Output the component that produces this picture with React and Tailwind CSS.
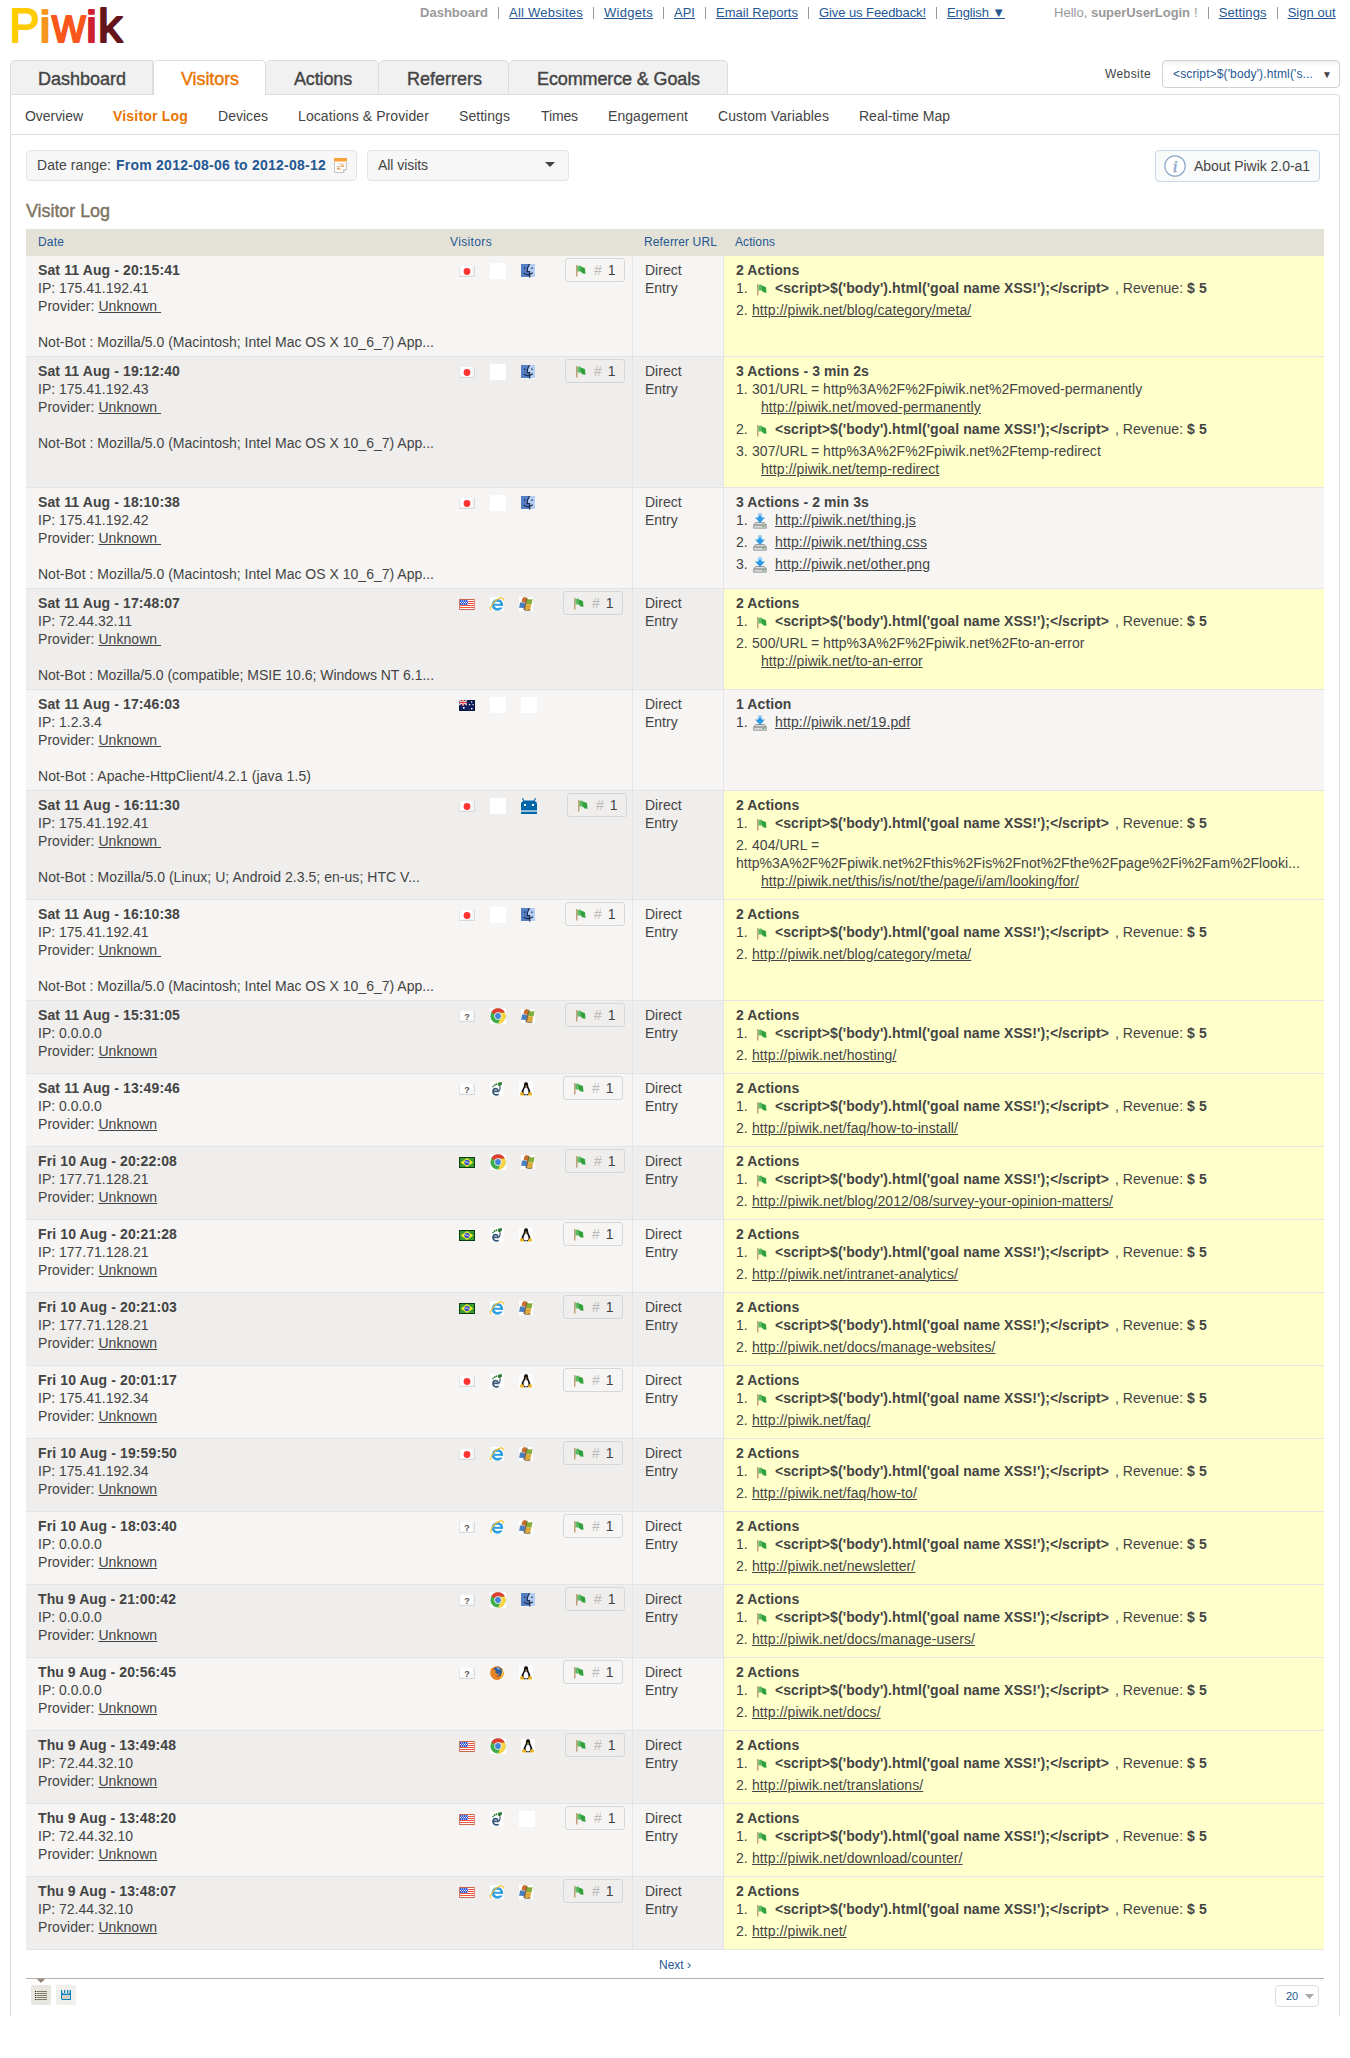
import React, { useLayoutEffect, useRef } from "react";

/* Spreads a single-line label over a given width through letter spacing. */
function Fit({ w, className = "", children }) {
  const ref = useRef(null);
  useLayoutEffect(() => {
    const el = ref.current;
    el.style.letterSpacing = "0px";
    const natural = el.getBoundingClientRect().width;
    el.style.letterSpacing = (w - natural) / el.textContent.length + "px";
  }, [w]);
  return (
    <span ref={ref} className={"inline-block whitespace-pre " + className}>
      {children}
    </span>
  );
}

function Logo() {
  const letters = [
    ["P", 9.5, 30, "#ffcc00", 48],
    ["i", 39.5, 11, "#f7941e", 44],
    ["w", 52, 33.5, "#f8561a", 48],
    ["i", 86, 11, "#cf2030", 44],
    ["k", 98, 24.5, "#64141a", 47],
  ];
  return (
    <svg width="130" height="60" viewBox="0 0 130 60" className="block overflow-visible">
      {letters.map(([c, x, len, color, size], i) => (
        <text key={i} x={x} y="42" fontSize={size} textLength={len} lengthAdjust="spacingAndGlyphs"
          fill={color} stroke={color} strokeWidth="2" strokeLinejoin="round" fontFamily="Liberation Sans, sans-serif">
          {c}
        </text>
      ))}
    </svg>
  );
}

const svg = (w, h, children, className = "") => (
  <svg width={w} height={h} viewBox={`0 0 ${w} ${h}`} className={"block shrink-0 " + className}>
    {children}
  </svg>
);

function CountryFlag({ code }) {
  if (code === "jp" || code === "xx")
    return svg(16, 11, <>
      <rect width="16" height="11" fill="#d9d9d9" />
      <rect x=".5" width="14.5" height="10" fill="#f4f4f4" />
      <rect x="1" y="0" width="12" height="9" fill="#fdfdfd" />
      {code === "jp"
        ? <circle cx="8" cy="5.5" r="3.4" fill="#f33" />
        : <text x="8" y="9" textAnchor="middle" fontSize="9" fontWeight="bold" fill="#555" fontFamily="Liberation Sans, sans-serif">?</text>}
    </>);
  if (code === "us")
    return svg(16, 11, <>
      <rect width="16" height="11" fill="#fff" />
      {[0, 2, 4, 6, 8, 10].map((y) => <rect key={y} y={y} width="16" height="1" fill={y === 0 || y === 10 ? "#c8684f" : "#f05545"} />)}
      <rect width="1" height="11" fill="#c97a66" />
      <rect x="15" width="1" height="11" fill="#e08a78" />
      <rect x="1" y="1" width="8" height="5" fill="#2b55e0" />
      {[2, 4, 6, 8].map((x) => <g key={x} fill="#fff"><rect x={x} y="1.5" width="1" height="1" /><rect x={x - 1} y="3" width="1" height="1" /><rect x={x} y="4.5" width="1" height="1" /></g>)}
    </>);
  if (code === "au")
    return svg(16, 11, <>
      <rect width="16" height="11" fill="#12205e" />
      <rect x="0.5" y="0.5" width="15" height="10" fill="none" stroke="#0c1440" />
      <path d="M0 0L8 5M8 0L0 5" stroke="#e8b8c0" strokeWidth="1.4" />
      <path d="M4 0V5.5M0 2.5H8" stroke="#fff" strokeWidth="2" />
      <path d="M4 0V5.5M0 2.5H8" stroke="#e33" strokeWidth="1" />
      <g fill="#fff"><rect x="4" y="7" width="1.6" height="1.6" /><rect x="12" y="1.3" width="1.2" height="1.2" /><rect x="10" y="4" width="1.2" height="1.2" /><rect x="13.5" y="4" width="1.2" height="1.2" /><rect x="12" y="8" width="1.4" height="1.4" /></g>
    </>);
  return svg(16, 11, <>
    <rect width="16" height="11" fill="#0a3d10" />
    <rect x="1" y="1" width="14" height="9" fill="#3a9a30" />
    <path d="M8 1L14.2 5.5L8 10L1.8 5.5Z" fill="#fbee2c" />
    <circle cx="8" cy="5.5" r="2.7" fill="#3a55c4" />
    <path d="M5.6 4.8Q8.4 4.6 10.4 6.5" fill="none" stroke="#cfe0f4" strokeWidth=".9" />
  </>);
}

function Browser({ name }) {
  if (name === "chrome")
    return svg(16, 16, <>
      <rect width="16" height="16" fill="#fff" />
      <circle cx="8" cy="8" r="7.6" fill="#3fae49" />
      <path d="M8 8L1.3 4.2A7.6 7.6 0 0 1 14.9 4.8H8Z" fill="#dd4033" />
      <path d="M8 4.8H14.9A7.6 7.6 0 0 1 8 15.6L10.8 9.6Z" fill="#fdd541" />
      <circle cx="8" cy="8" r="3.7" fill="#f6f6f2" />
      <circle cx="8" cy="8" r="2.9" fill="#4484d8" />
    </>);
  if (name === "ie")
    return svg(14, 14, <>
      <rect width="14" height="14" fill="#fff" />
      <circle cx="7.4" cy="7.8" r="4.5" fill="none" stroke="#2f9fe4" strokeWidth="2.7" />
      <rect x="9" y="8.9" width="5" height="1.6" fill="#fff" />
      <path d="M4 7.8H13" stroke="#2f9fe4" strokeWidth="2" />
      <path d="M1.5 13.2C-1 11 4 2.5 11 .9C13.6.6 13.5 2 12.8 3.4" fill="none" stroke="#f5c02f" strokeWidth="1.2" />
    </>);
  if (name === "firefox")
    return svg(14, 14, <>
      <rect width="14" height="14" fill="#fff" />
      <circle cx="7" cy="7" r="6.7" fill="#d86a1c" />
      <circle cx="7.6" cy="5.8" r="4.5" fill="#2d5f9c" />
      <path d="M6 1.4Q9 .6 10.4 3L8.6 4Z" fill="#73b4de" />
      <path d="M.6 4L2 1.6L3.6 3.6L6.2 4.2L5 6L7 8L10 7.6Q8 11 4.6 9.6Q8 13 11.6 9.4Q13 7 11.6 3Q14.4 5.4 13.4 9A6.7 6.7 0 0 1 .6 9Z" fill="#ea8426" />
      <path d="M12 3Q14.2 6 13 9.5Q12 12 9.4 13Q12.6 9.6 12 3Z" fill="#f8d24a" />
    </>);
  if (name === "epiphany")
    return svg(14, 14, <>
      <rect width="14" height="14" fill="#fff" />
      <path d="M3.4 9.4H8C8.4 5.6 3 5.6 3 9.6C3 13.4 7.4 13.4 8.6 12" fill="none" stroke="#3a5878" strokeWidth="1.7" />
      <path d="M8 .8L12 0L11.8 2.8L9.4 4.6L8 3.2Z" fill="#2e7a35" />
      <g fill="#2e7a35"><circle cx="6.4" cy="2.2" r="1" /><circle cx="4.6" cy="3.2" r=".9" /><circle cx="3" cy="4.6" r=".8" /></g>
      <path d="M10 4.4Q10.6 7 9 9.4" stroke="#3a5878" strokeWidth="1.2" fill="none" />
    </>);
  return <Blank />;
}

const Blank = () => <span className="block size-4 shrink-0 bg-white" />;

function System({ name }) {
  if (name === "mac")
    return svg(14, 14, <>
      <rect width="14" height="14" fill="#fff" />
      <rect width="14" height="13" fill="#b4cdf2" />
      <path d="M0 0H8.4Q6.4 4 6.2 7.6H8.4V13H0Z" fill="#5580c4" />
      <path d="M8.6 0Q6 4 6.2 7.6H8.6Q8.2 11 9 13.6M3.6 3.6V5M11 3.6V5M2.6 9Q7 12.4 11.8 8.8" fill="none" stroke="#1c2c4c" strokeWidth="1.2" />
    </>);
  if (name === "windows")
    return svg(14, 14, <>
      <rect width="14" height="14" fill="#fff" />
      <path d="M5 0Q6.4 0 8 1.4L6.8 6.6Q4.6 4.8 2.6 5.6L3 2Z" fill="#c9702f" />
      <path d="M7.8 1.6Q11 3.2 13.6 1.8L12.6 7.2Q10 8 6.8 6.6Z" fill="#83ad3a" />
      <path d="M1 5.6Q4.4 5 6.8 6.8L5.6 12Q3 10.4.2 11Z" fill="#4a7fc0" />
      <path d="M6.8 6.8Q9.8 8.2 12.4 7.2L11.2 12.6Q9 13.8 5.6 12Z" fill="#dfa93a" />
      <path d="M8 .6L5.4 13M4.6 12.6Q9 14.4 11.6 12.8" stroke="#7c5a30" strokeWidth="1" fill="none" />
    </>);
  if (name === "linux")
    return svg(14, 14, <>
      <rect width="14" height="14" fill="#fff" />
      <path d="M7 .3C9.2.3 9.2 2.4 9.2 4C9.6 6 11.8 8 11.4 11.4L9 13.2H5L2.6 11.4C2.2 8 4.6 6 4.9 4C4.9 2.4 4.9.3 7 .3Z" fill="#161616" />
      <path d="M7 5C8.6 6.4 9.9 9 9.4 11.6Q7 13.4 4.6 11.6C4.1 9 5.4 6.4 7 5Z" fill="#fff" />
      <path d="M5.8 3.8H8.2L7 5.2Z" fill="#e9a820" />
      <path d="M1 11.2L3 9.8L5.2 12.4L4.4 13.8L1 13.2Z M13 11.2L11 9.8L8.9 12.4L9.6 13.8L13 13.2Z" fill="#f0b323" />
    </>);
  if (name === "android")
    return svg(16, 16, <>
      <rect width="16" height="16" fill="#fff" fillOpacity=".2" />
      <path d="M3 3L1.4.3M13 3L14.6.3" fill="none" stroke="#06a" strokeWidth="1.1" />
      <path d="M0 12.6V6Q0 3 4 2.4H12Q16 3 16 6V12.6Z" fill="#06a" />
      <rect y="13.6" width="16" height="2.4" fill="#06a" />
      <rect y="12.6" width="16" height="1" fill="#a8cce0" />
      <rect x="3" y="6" width="2" height="2" fill="#fff" /><rect x="11" y="6" width="2" height="2" fill="#fff" />
    </>);
  return <Blank />;
}

const GoalFlag = ({ className = "" }) => (
  <svg width="10" height="12" viewBox="0 0 10 12" className={className}>
    <path d="M.8 0V11.5" stroke="#b98a5e" strokeWidth="1.2" />
    <path d="M1.4.9L4.4.6L5.4 2L9 3L9.6 8.8L6.4 8.4L4.6 6.6L1.4 6.6Z" fill="#5cba62" />
    <path d="M4.6 1.6L8.6 3.2L9.2 8.4L6.4 7.8L4.8 6Z" fill="#2fa03c" />
  </svg>
);

const Download = () => (
  <svg width="14" height="16" viewBox="0 0 14 16" className="ml-px inline-block align-[-4px]">
    <path d="M2.5 9.5H11.5L13.4 12V15.2H.6V12Z" fill="#d9d9d9" stroke="#8d8d8d" strokeWidth=".8" />
    <path d="M1 12H13" stroke="#777" strokeWidth="1" />
    <rect x="9.5" y="13" width="2" height="1" fill="#49b556" />
    <path d="M5.4.5H8.6V4.6H12L7 10L2 4.6H5.4Z" fill="#2f9be6" />
    <path d="M5.4 0H8.6V2.6H5.4Z" fill="#a9d5f5" />
  </svg>
);

const goal = { t: "goal" };
const url = (u) => ({ t: "url", u });
const dl = (u) => ({ t: "dl", u });
const err = (title, u, long) => ({ t: "err", title, u, long });
const MAC = "Not-Bot : Mozilla/5.0 (Macintosh; Intel Mac OS X 10_6_7) App...";

const visits = [
  ["Sat 11 Aug - 20:15:41", "175.41.192.41", MAC, "jp", "none", "mac", "2 Actions", [goal, url("blog/category/meta/")], "h-[101px]"],
  ["Sat 11 Aug - 19:12:40", "175.41.192.43", MAC, "jp", "none", "mac", "3 Actions - 3 min 2s", [err("301/URL = http%3A%2F%2Fpiwik.net%2Fmoved-permanently", "moved-permanently"), goal, err("307/URL = http%3A%2F%2Fpiwik.net%2Ftemp-redirect", "temp-redirect")], "h-[131px]"],
  ["Sat 11 Aug - 18:10:38", "175.41.192.42", MAC, "jp", "none", "mac", "3 Actions - 2 min 3s", [dl("thing.js"), dl("thing.css"), dl("other.png")], "h-[101px]"],
  ["Sat 11 Aug - 17:48:07", "72.44.32.11", "Not-Bot : Mozilla/5.0 (compatible; MSIE 10.6; Windows NT 6.1...", "us", "ie", "windows", "2 Actions", [goal, err("500/URL = http%3A%2F%2Fpiwik.net%2Fto-an-error", "to-an-error")], "h-[101px]"],
  ["Sat 11 Aug - 17:46:03", "1.2.3.4", "Not-Bot : Apache-HttpClient/4.2.1 (java 1.5)", "au", "none", "none", "1 Action", [dl("19.pdf")], "h-[101px]"],
  ["Sat 11 Aug - 16:11:30", "175.41.192.41", "Not-Bot : Mozilla/5.0 (Linux; U; Android 2.3.5; en-us; HTC V...", "jp", "none", "android", "2 Actions", [goal, err("404/URL =", "this/is/not/the/page/i/am/looking/for/", "http%3A%2F%2Fpiwik.net%2Fthis%2Fis%2Fnot%2Fthe%2Fpage%2Fi%2Fam%2Flooki...")], "h-[109px]"],
  ["Sat 11 Aug - 16:10:38", "175.41.192.41", MAC, "jp", "none", "mac", "2 Actions", [goal, url("blog/category/meta/")], "h-[101px]"],
  ["Sat 11 Aug - 15:31:05", "0.0.0.0", "", "xx", "chrome", "windows", "2 Actions", [goal, url("hosting/")]],
  ["Sat 11 Aug - 13:49:46", "0.0.0.0", "", "xx", "epiphany", "linux", "2 Actions", [goal, url("faq/how-to-install/")]],
  ["Fri 10 Aug - 20:22:08", "177.71.128.21", "", "br", "chrome", "windows", "2 Actions", [goal, url("blog/2012/08/survey-your-opinion-matters/")]],
  ["Fri 10 Aug - 20:21:28", "177.71.128.21", "", "br", "epiphany", "linux", "2 Actions", [goal, url("intranet-analytics/")]],
  ["Fri 10 Aug - 20:21:03", "177.71.128.21", "", "br", "ie", "windows", "2 Actions", [goal, url("docs/manage-websites/")]],
  ["Fri 10 Aug - 20:01:17", "175.41.192.34", "", "jp", "epiphany", "linux", "2 Actions", [goal, url("faq/")]],
  ["Fri 10 Aug - 19:59:50", "175.41.192.34", "", "jp", "ie", "windows", "2 Actions", [goal, url("faq/how-to/")]],
  ["Fri 10 Aug - 18:03:40", "0.0.0.0", "", "xx", "ie", "windows", "2 Actions", [goal, url("newsletter/")]],
  ["Thu 9 Aug - 21:00:42", "0.0.0.0", "", "xx", "chrome", "mac", "2 Actions", [goal, url("docs/manage-users/")]],
  ["Thu 9 Aug - 20:56:45", "0.0.0.0", "", "xx", "firefox", "linux", "2 Actions", [goal, url("docs/")]],
  ["Thu 9 Aug - 13:49:48", "72.44.32.10", "", "us", "chrome", "linux", "2 Actions", [goal, url("translations/")]],
  ["Thu 9 Aug - 13:48:20", "72.44.32.10", "", "us", "epiphany", "none", "2 Actions", [goal, url("download/counter/")]],
  ["Thu 9 Aug - 13:48:07", "72.44.32.10", "", "us", "ie", "windows", "2 Actions", [goal, url("")]],
];

function Action({ a, n }) {
  return (
    <li className={a.t === "err" ? "pb-1" : "mb-1 h-[18px]"}>
      <span className="inline-block w-4">{n}.</span>
      {a.t === "goal" && (
        <>
          <GoalFlag className="ml-[5px] inline-block align-[-3px]" />
          <Fit w={334} className="ml-2 font-bold">{"<script>$('body').html('goal name XSS!');</script>"}</Fit>
          <Fit w={72} className="ml-[6px]">, Revenue: </Fit>
          <Fit w={20} className="font-bold">$ 5</Fit>
        </>
      )}
      {a.t === "url" && <span className="tracking-[0.08px] underline">http://piwik.net/{a.u}</span>}
      {a.t === "dl" && <><Download /><span className="ml-2 tracking-[0.13px] underline">http://piwik.net/{a.u}</span></>}
      {a.t === "err" && (
        <>
          <span className="tracking-[0.04px]">{a.title}</span>
          {a.long && <Fit w={564} className="block w-fit">{a.long}</Fit>}
          <span className="block pl-[25px]"><span className="tracking-[0.08px] underline">http://piwik.net/{a.u}</span></span>
        </>
      )}
    </li>
  );
}

function Visit({ v, i }) {
  const [date, ip, bot, country, browser, os, title, actions, h = "h-[73px]"] = v;
  const converted = actions.includes(goal);
  const shift = (name) => (["none", "chrome", "android"].includes(name) ? "pt-[7px]" : "pt-2");
  const botWidth = bot === MAC ? 396 : bot.includes("MSIE") ? 396 : bot.includes("Linux") ? 382 : 273;
  return (
    <div className={`flex ${h} border-b border-[#e4e4e6] ${i % 2 ? "bg-[#efeeec]" : "bg-[#f6f5f3]"}`}>
      <div className="w-[433px] pl-3 pt-[5px]">
        <div><Fit w={date.startsWith("Sat") ? 142 : date.startsWith("Fri") ? 139 : 138} className="font-bold">{date}</Fit></div>
        <div>IP: {ip}</div>
        <div className="tracking-[0.05px]">Provider: <span className="whitespace-pre underline">{bot ? "Unknown " : "Unknown"}</span></div>
        {bot && <div className="pt-[18px]"><Fit w={botWidth}>{bot}</Fit></div>}
      </div>
      <div className="flex w-[173px] items-start">
        <div className="pt-[10px]"><CountryFlag code={country} /></div>
        <div className={"ml-[15px] " + shift(browser)}><Browser name={browser} /></div>
        <div className={"ml-[15px] " + shift(os)}><System name={os} /></div>
        {converted && (
          <div className="ml-[30px] mt-[2px] flex h-6 w-[60px] items-center rounded-[3px] border border-[#d6d6d6] pl-[10px]">
            <GoalFlag className="mt-[2px]" />
            <span className="ml-2 text-[#bbb]">#</span>
            <span className="ml-[6px]">1</span>
          </div>
        )}
      </div>
      <div className="w-[91px] border-l border-[#e4e4e6] pl-3 pt-[5px]">Direct<br />Entry</div>
      <div className={`flex-1 border-l border-[#e4e4e6] pl-3 pt-[5px] ${converted ? "bg-[#ffffcc]" : ""}`}>
        <div className="font-bold tracking-[0.1px]">{title}</div>
        <ol>{actions.map((a, k) => <Action key={k} a={a} n={k + 1} />)}</ol>
      </div>
    </div>
  );
}

const Sep = () => <span className="mx-[10px] h-3 w-px bg-[#999]" />;
const TopLink = ({ w, children }) => <a className="text-[#255792]"><Fit w={w} className="underline">{children}</Fit></a>;

export default function App() {
  return (
    <div className="h-[2058px] w-[1350px] overflow-hidden bg-white font-['Liberation_Sans',Arial,sans-serif] text-[14px] leading-[18px] text-[#444]">
      <header className="flex h-[60px]">
        <Logo />
        <div className="ml-[290px] mt-px flex h-6 items-center text-[13px] text-[#999]">
          <Fit w={68} className="font-bold">Dashboard</Fit>
          <Sep /><TopLink w={74}>All Websites</TopLink>
          <Sep /><TopLink w={49}>Widgets</TopLink>
          <Sep /><TopLink w={21}>API</TopLink>
          <Sep /><TopLink w={82}>Email Reports</TopLink>
          <Sep /><TopLink w={107}>Give us Feedback!</TopLink>
          <Sep /><TopLink w={58}>English ▼</TopLink>
          <Fit w={37} className="ml-[49px]">Hello, </Fit>
          <Fit w={99} className="font-bold">superUserLogin</Fit>
          <span className="ml-1">!</span>
          <Sep /><TopLink w={48}>Settings</TopLink>
          <Sep /><TopLink w={48}>Sign out</TopLink>
        </div>
      </header>

      <div className="mx-[10px] flex h-[34px] items-end justify-between">
        <nav className="flex text-[18px] leading-[36px] text-[#444] [-webkit-text-stroke:0.4px_currentColor]">
          <div className="h-[34px] w-[143px] rounded-tl-[5px] border border-b-0 border-[#ddd] bg-[#f1f1f1] pl-[27px]"><Fit w={88}>Dashboard</Fit></div>
          <div className="relative z-10 -mb-px h-[35px] w-[113px] rounded-t-[5px] border border-b-0 border-[#ddd] bg-white pl-[27px] text-[#e87500]"><Fit w={58}>Visitors</Fit></div>
          <div className="h-[34px] w-[113px] rounded-t-[5px] border border-b-0 border-l-0 border-[#ddd] bg-[#f1f1f1] pl-7"><Fit w={58}>Actions</Fit></div>
          <div className="h-[34px] w-[130px] rounded-t-[5px] border border-b-0 border-l-0 border-[#ddd] bg-[#f1f1f1] pl-7"><Fit w={75}>Referrers</Fit></div>
          <div className="h-[34px] w-[219px] rounded-t-[5px] border border-b-0 border-l-0 border-[#ddd] bg-[#f1f1f1] pl-7"><Fit w={163}>Ecommerce & Goals</Fit></div>
        </nav>
        <div className="flex h-full text-[12px] leading-[28px]">
          <Fit w={46} className="mr-[11px]">Website</Fit>
          <div className="flex h-7 w-[178px] justify-between rounded-[4px] border border-[#d2d2d2] bg-linear-to-b from-[#f0f0f0] to-white to-20% pl-[10px] pr-[7px] leading-[27px]">
            <Fit w={140} className="text-[#255792]">{"<script>$('body').html('s..."}</Fit>
            <span className="text-[10px]">▼</span>
          </div>
        </div>
      </div>

      <main className="mx-[10px] h-[1922px] rounded-tr-[4px] border border-b-0 border-[#ddd]">
        <nav className="flex h-10 items-center border-b border-[#ddd] pl-[14px] pt-[3px]">
          <Fit w={58}>Overview</Fit>
          <Fit w={75} className="ml-[30px] font-bold text-[#e87500]">Visitor Log</Fit>
          <Fit w={50} className="ml-[30px]">Devices</Fit>
          <Fit w={131} className="ml-[30px]">Locations & Provider</Fit>
          <Fit w={51} className="ml-[30px]">Settings</Fit>
          <Fit w={37} className="ml-[31px]">Times</Fit>
          <Fit w={80} className="ml-[30px]">Engagement</Fit>
          <Fit w={111} className="ml-[30px]">Custom Variables</Fit>
          <Fit w={91} className="ml-[30px]">Real-time Map</Fit>
        </nav>

        <div className="mx-[15px] mt-[15px] flex items-start">
          <div className="flex h-[31px] w-[331px] items-center rounded-[4px] border border-[#e4e4e4] bg-[#f7f7f7] pb-px pl-[10px]">
            <Fit w={74}>Date range:</Fit>
            <Fit w={210} className="ml-[5px] font-bold text-[#255792]">From 2012-08-06 to 2012-08-12</Fit>
            <svg width="14" height="15" viewBox="0 0 14 15" className="ml-[8px]">
              <path d="M.5 3V14.5H9.5L12.5 11.5V3" fill="#fff" stroke="#c4c4c4" />
              <path d="M9.5 14.5V11.5H12.5" fill="#e8e8e8" stroke="#c4c4c4" />
              <rect width="13" height="3" fill="#f9a23c" />
              <rect y="3" width="13" height="1" fill="#fcd09c" />
              <g fill="#e0c0a0"><rect x="4.5" y="5.5" width="6" height="1" /><rect x="2.5" y="8" width="8" height="1" /><rect x="2.5" y="10.5" width="5" height="1" /></g>
              <rect x="7.5" y="7" width="2" height="2" fill="#f5a04c" />
              <rect x="3.5" y="9.6" width="2" height="2" fill="#f5a04c" />
            </svg>
          </div>
          <div className="ml-[10px] flex h-[31px] w-[202px] items-center justify-between rounded-[4px] border border-[#e4e4e4] bg-[#f7f7f7] pb-px pl-[10px] pr-[13px]">
            <Fit w={50}>All visits</Fit>
            <svg width="10" height="5" viewBox="0 0 10 5" className="-mt-px"><path d="M0 0H10L5 5Z" fill="#444" /></svg>
          </div>
          <div className="ml-auto mr-1 flex h-8 w-[165px] items-center rounded-[4px] border border-[#c9d6e6] bg-[#f9fafa] pl-2">
            <svg width="22" height="22" viewBox="0 0 22 22" className="mr-2">
              <circle cx="11" cy="11" r="10.2" fill="#fff" stroke="#8fa9c9" strokeWidth="1.2" />
              <text x="11" y="16.5" textAnchor="middle" fontSize="17" fontStyle="italic" fill="#8fa9c9" stroke="#8fa9c9" strokeWidth=".6" fontFamily="Liberation Serif, serif">i</text>
            </svg>
            <Fit w={116}>About Piwik 2.0-a1</Fit>
          </div>
        </div>

        <h2 className="ml-[15px] mt-[18px] h-[29px] text-[18px] leading-[22px] text-[#7e7363] [-webkit-text-stroke:0.4px_currentColor]"><Fit w={84}>Visitor Log</Fit></h2>

        <section className="mx-[15px] w-[1298px]">
          <div className="flex h-[27px] bg-[#e4e2d7] pt-[4px] text-[12px] text-[#255792]">
            <div className="w-[424px] pl-3"><Fit w={26}>Date</Fit></div>
            <div className="w-[194px]"><Fit w={42}>Visitors</Fit></div>
            <div className="w-[91px]"><Fit w={73}>Referrer URL</Fit></div>
            <div><Fit w={40}>Actions</Fit></div>
          </div>
          {visits.map((v, i) => <Visit key={i} v={v} i={i} />)}
          <div className="flex h-7 justify-center pt-[6px] text-[12px] text-[#255792]"><Fit w={32}>Next ›</Fit></div>
          <div className="flex items-start justify-between border-t border-[#b7afa4]">
            <div className="flex">
              <div className="ml-[5px] w-5">
                <svg width="8" height="4" viewBox="0 0 8 4" className="ml-[6px] block"><path d="M0 0H8L4 4Z" fill="#8f8677" /></svg>
                <div className="mt-[2px] flex h-5 items-center justify-center rounded-[2px] bg-[#e7e7df]">
                  {svg(12, 9, [0, 2, 4, 6, 8].map((y) => <g key={y}><rect y={y} width="1.3" height="1" fill="#222" /><rect x="2" y={y} width="10" height="1" fill="#827a68" /></g>))}
                </div>
              </div>
              <div className="ml-[5px] mt-[6px] flex size-5 items-center justify-center rounded-[2px] bg-[#f0f0ed]">
                {svg(10, 10, <>
                  <path d="M0 0H1.3V3H3V0H4.3V3H6V0H7.3V3H8.6V0H10V10H1L0 9Z" fill="#0c84bb" />
                  <rect x="2" y="3" width="6" height="1" fill="#8ec3dd" />
                  <rect x="1" y="5" width="8" height="4" fill="#d4d0c6" />
                </>)}
              </div>
            </div>
            <div className="mr-[5px] mt-[6px] flex h-[22px] w-11 items-center justify-between rounded-[4px] border border-[#ddd] pl-[10px] pr-[4px] text-[11px] text-[#255792]">
              <Fit w={12}>20</Fit>
              <svg width="9" height="5" viewBox="0 0 9 5"><path d="M0 0H9L4.5 5Z" fill="#aaa" /></svg>
            </div>
          </div>
        </section>
      </main>
    </div>
  );
}
